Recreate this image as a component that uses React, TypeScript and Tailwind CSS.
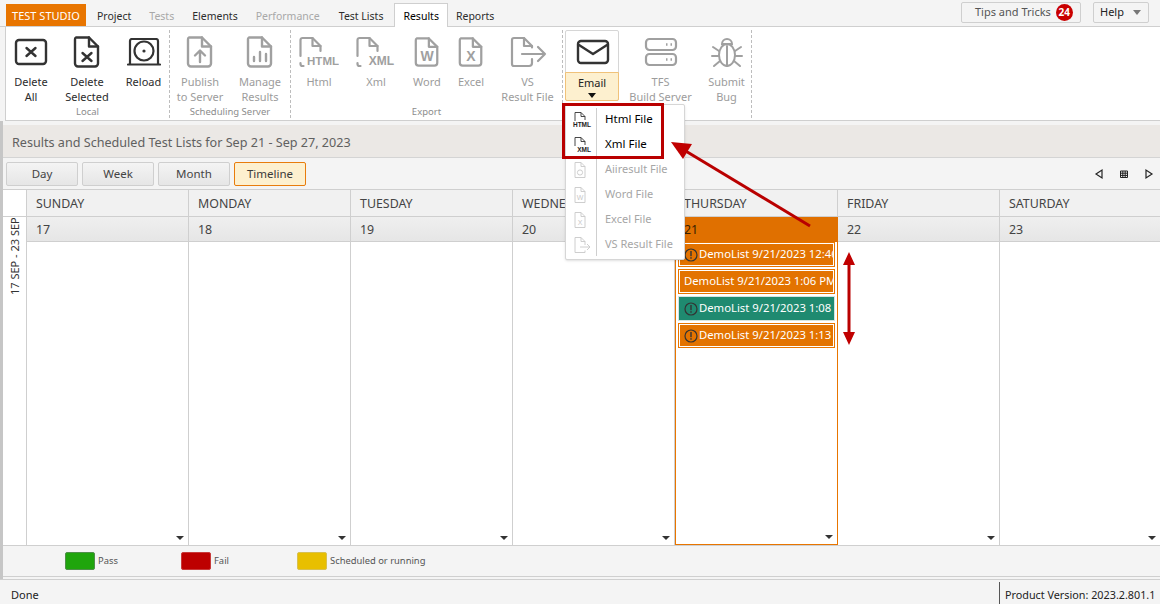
import type { ReactNode } from "react";

const ink = "#333333";
const mute = "#a0a0a0";

function FileIcon({ color, children, w = 30 }: { color: string; children?: ReactNode; w?: number }) {
  return (
    <svg width={w} height="32" viewBox="0 0 30 32" fill="none" stroke={color} strokeWidth="2.4" strokeLinejoin="round" strokeLinecap="round">
      <path d="M4 1.5h13l9 9v17a3 3 0 0 1-3 3H6a3 3 0 0 1-3-3v-24a2 2 0 0 1 1-2z" />
      <path d="M17 1.5v9h9" />
      {children}
    </svg>
  );
}

function LabelFile({ label, small }: { label: string; small?: boolean }) {
  return (
    <svg width="40" height="32" viewBox="0 0 40 32" fill="none" stroke={mute} strokeWidth="2.2" strokeLinejoin="round" strokeLinecap="round">
      <path d="M1.5 20V4a2 2 0 0 1 2-2h10l8 8v5" />
      <path d="M13.5 2v8h8" />
      <path d="M1.5 27v1a2 2 0 0 0 2 2h1" />
      <text x={small ? 38 : 40} y="29" textAnchor="end" fill={mute} stroke="none" fontSize={small ? 12 : 11.5} fontWeight="700" fontFamily="'Liberation Sans', sans-serif">{label}</text>
    </svg>
  );
}

function RibbonButton({ w, lines, muted, children }: { w: string; lines: string[]; muted?: boolean; children: ReactNode }) {
  return (
    <div className={`${w} flex flex-col items-center shrink-0`}>
      <div className="h-[36px] mt-[4px] flex items-center justify-center">{children}</div>
      <div className={`mt-[4px] text-[11px] leading-[15px] text-center whitespace-nowrap ${muted ? "text-[#9c9c9c]" : "text-[#2c2c2c]"}`}>
        {lines.map((l) => (
          <div key={l}>{l}</div>
        ))}
      </div>
    </div>
  );
}

function RibbonGroup({ label, children }: { label?: string; children: ReactNode }) {
  return (
    <div className="relative flex border-r border-dashed border-[#bdbdbd] h-[88px] mt-[3px] shrink-0">
      {children}
      {label && <div className="absolute left-0 right-0 top-[75px] text-center text-[9.5px] leading-[14px] text-[#8c8c8c]">{label}</div>}
    </div>
  );
}

function Tab({ label, off }: { label: string; off?: boolean }) {
  return <div className={`px-[9px] mt-[3px] text-[10.5px] leading-[26px] h-[23px] ${off ? "text-[#a8a8a8]" : "text-[#2c2c2c]"}`}>{label}</div>;
}

function ViewButton({ label, active }: { label: string; active?: boolean }) {
  return (
    <div
      className={`w-[72px] h-[24px] rounded-[2px] border text-center text-[11.5px] leading-[22px] ${
        active ? "border-[#e87c0c] bg-[#fdf0cf] text-[#3a3a3a]" : "border-[#cfcfcf] bg-gradient-to-b from-[#f4f4f4] to-[#e6e6e6] text-[#444444]"
      }`}
    >
      {label}
    </div>
  );
}

function Alert() {
  return (
    <svg width="14" height="14" viewBox="0 0 14 14" className="shrink-0" fill="none">
      <circle cx="7" cy="7" r="6" stroke="#333333" strokeWidth="1.2" />
      <rect x="6.3" y="3" width="1.4" height="5.2" fill="#333333" />
      <rect x="6.3" y="9.2" width="1.4" height="1.5" fill="#333333" />
    </svg>
  );
}

function EventItem({ text, teal, noIcon }: { text: string; teal?: boolean; noIcon?: boolean }) {
  return (
    <div className={`h-[25px] mb-[2px] border ${teal ? "border-[#d7e4e0]" : "border-[#e87500]"}`}>
      <div className={`h-full flex items-center gap-[1px] border pl-[4px] overflow-hidden ${teal ? "bg-[#1f8a70] border-[#1f8a70]" : "bg-[#e37300] border-white"}`}>
        {!noIcon && <Alert />}
        <span className="text-[11.3px] text-white whitespace-nowrap">{text}</span>
      </div>
    </div>
  );
}

function Caret() {
  return <div className="absolute right-[4px] bottom-[5px] w-0 h-0 border-x-[4px] border-x-transparent border-t-[4px] border-t-[#333333]" />;
}

const days = [
  { name: "SUNDAY", n: "17", w: "w-[162px]" },
  { name: "MONDAY", n: "18", w: "w-[162px]" },
  { name: "TUESDAY", n: "19", w: "w-[162px]" },
  { name: "WEDNESDAY", n: "20", w: "w-[162px]" },
  { name: "THURSDAY", n: "21", w: "w-[163px]", today: true },
  { name: "FRIDAY", n: "22", w: "w-[162px]" },
  { name: "SATURDAY", n: "23", w: "w-[161px]" },
];

function MenuItem({ label, off, icon }: { label: string; off?: boolean; icon: ReactNode }) {
  return (
    <div className="flex h-[25px] items-center">
      <div className="w-[31px] flex justify-center shrink-0">{icon}</div>
      <div className={`pl-[8px] ${off ? "text-[11px] text-[#a6a6a6]" : "text-[11.5px] text-black pb-[2px]"}`}>{label}</div>
    </div>
  );
}

function MiniFile({ label, letter, ring, arrow }: { label?: string; letter?: string; ring?: boolean; arrow?: boolean }) {
  const c = label ? "#333333" : "#c8c8c8";
  return (
    <svg width="20" height="18" viewBox="0 0 20 18" fill="none" stroke={c} strokeWidth="0.9">
      <path d="M3 10V1.5h6l4 4V9" />
      <path d="M9 1.5v4h4" />
      {!label && !arrow && <path d="M3 10v6.5h10V9" />}
      {arrow && <path d="M3 10v6.5h10v-2M8 11h10M15 8l3 3-3 3" />}
      {ring && <circle cx="8" cy="11.5" r="2.6" />}
      {label && <text x="19" y="16" textAnchor="end" fill="#222222" stroke="none" fontSize="6.5" fontWeight="700" fontFamily="'Liberation Sans', sans-serif">{label}</text>}
      {letter && <text x="8" y="14" textAnchor="middle" fill={c} stroke="none" fontSize="7" fontFamily="'Liberation Sans', sans-serif">{letter}</text>}
    </svg>
  );
}

export default function App() {
  return (
    <div className="relative w-[1160px] h-[604px] overflow-hidden bg-[#f4f4f4] font-['Noto_Sans',sans-serif]">
      {/* tabs */}
      <div className="h-[27px] flex border-b border-[#cfcfcf] pl-[6px]">
        <div className="mt-[4px] h-[22px] w-[80px] bg-[#e87500] text-white text-[11px] leading-[23px] text-center">TEST STUDIO</div>
        <div className="flex pl-[2px]">
          <Tab label="Project" />
          <Tab label="Tests" off />
          <Tab label="Elements" />
          <Tab label="Performance" off />
          <div className="ml-[1px]">
            <Tab label="Test Lists" />
          </div>
          <div className="ml-[2px] mt-[3px] h-[24px] px-[8px] bg-white border border-b-0 border-[#cfcfcf] text-[10.5px] leading-[25px] text-black">Results</div>
          <div className="-ml-[1px]">
            <Tab label="Reports" />
          </div>
        </div>
        <div className="ml-auto flex items-start pt-[2px] pr-[11px]">
          <div className="w-[120px] h-[21px] border border-[#cfcfcf] rounded-[2px] flex items-center pl-[13px] gap-[5px] text-[11px] text-[#555555]">
            Tips and Tricks
            <span className="w-[17px] h-[17px] rounded-full bg-[#c90000] text-white text-[10px] font-bold leading-[17px] text-center">24</span>
          </div>
          <div className="ml-[12px] w-[56px] h-[21px] border border-[#cfcfcf] rounded-[2px] flex items-center pl-[6px] text-[11px] text-[#222222]">
            Help
            <span className="ml-auto mr-[7px] w-0 h-0 border-x-[4px] border-x-transparent border-t-[5px] border-t-[#777777]" />
          </div>
        </div>
      </div>

      {/* ribbon */}
      <div className="ml-[5px] h-[94px] bg-white border-l border-b border-[#cfcfcf] flex">
        <RibbonGroup label="Local">
          <RibbonButton w="w-[50px]" lines={["Delete", "All"]}>
            <svg width="34" height="30" viewBox="0 0 34 30" fill="none" stroke={ink} strokeWidth="2.4" strokeLinecap="round">
              <rect x="2" y="3" width="30" height="24" rx="3" />
              <path d="M12.5 11l9 8M21.5 11l-9 8" />
            </svg>
          </RibbonButton>
          <RibbonButton w="w-[62px]" lines={["Delete", "Selected"]}>
            <FileIcon color={ink}>
              <path d="M10.5 17l9 8M19.5 17l-9 8" />
            </FileIcon>
          </RibbonButton>
          <RibbonButton w="w-[51px]" lines={["Reload"]}>
            <svg width="34" height="28" viewBox="0 0 34 28" fill="none" stroke={ink} strokeWidth="2.2" strokeLinecap="round">
              <path d="M3 26V3a2 2 0 0 1 2-2h24a2 2 0 0 1 2 2v23" />
              <path d="M1 26.5h32" />
              <circle cx="17" cy="13" r="9.5" />
              <circle cx="17" cy="13" r="1.6" fill={ink} stroke="none" />
            </svg>
          </RibbonButton>
        </RibbonGroup>
        <RibbonGroup label="Scheduling Server">
          <RibbonButton w="w-[60px]" lines={["Publish", "to Server"]} muted>
            <FileIcon color={mute}>
              <path d="M15 26V15M10 19.5l5-5 5 5" />
            </FileIcon>
          </RibbonButton>
          <RibbonButton w="w-[60px]" lines={["Manage", "Results"]} muted>
            <FileIcon color={mute}>
              <path d="M9 25v-4M15 25v-9M21 25v-7" />
            </FileIcon>
          </RibbonButton>
        </RibbonGroup>
        <RibbonGroup label="Export">
          <RibbonButton w="w-[56px]" lines={["Html"]} muted>
            <LabelFile label="HTML" />
          </RibbonButton>
          <RibbonButton w="w-[58px]" lines={["Xml"]} muted>
            <LabelFile label="XML" small />
          </RibbonButton>
          <RibbonButton w="w-[44px]" lines={["Word"]} muted>
            <FileIcon color={mute} w={28}>
              <text x="15" y="26" textAnchor="middle" fill={mute} stroke="none" fontSize="15" fontWeight="700" fontFamily="'Liberation Sans', sans-serif">W</text>
            </FileIcon>
          </RibbonButton>
          <RibbonButton w="w-[44px]" lines={["Excel"]} muted>
            <FileIcon color={mute} w={28}>
              <text x="15" y="26" textAnchor="middle" fill={mute} stroke="none" fontSize="15" fontWeight="700" fontFamily="'Liberation Sans', sans-serif">X</text>
            </FileIcon>
          </RibbonButton>
          <RibbonButton w="w-[69px]" lines={["VS", "Result File"]} muted>
            <svg width="38" height="32" viewBox="0 0 38 32" fill="none" stroke={mute} strokeWidth="2.2" strokeLinejoin="round" strokeLinecap="round">
              <path d="M23 11.5V10l-8-8H5a2 2 0 0 0-2 2v24a2 2 0 0 0 2 2h15a3 3 0 0 0 3-3v-4" />
              <path d="M15 2v8h8" />
              <path d="M13 18h23M29 11l7 7-7 7" />
            </svg>
          </RibbonButton>
        </RibbonGroup>
        <div className="flex border-r border-dashed border-[#bdbdbd] h-[88px] mt-[3px] shrink-0 pl-[2px]">
          <div className="w-[54px] h-[71px] rounded-[2px] border border-[#d6d6d6] flex flex-col items-center shrink-0">
            <div className="h-[41px] pt-[1px] pl-[2px] flex items-center justify-center">
              <svg width="34" height="26" viewBox="0 0 34 26" fill="none" stroke={ink} strokeWidth="2.4" strokeLinecap="round" strokeLinejoin="round">
                <rect x="2" y="2" width="30" height="22" rx="3" />
                <path d="M3 6l14 9 14-9" />
              </svg>
            </div>
            <div className="w-[54px] -mb-px flex-1 rounded-b-[2px] border border-[#f0c27a] bg-[#fdf0cf] flex flex-col items-center text-[11px] leading-[15px] text-[#222222] pt-[2px]">
              Email
              <span className="mt-[3px] w-0 h-0 border-x-[4px] border-x-transparent border-t-[5px] border-t-[#111111]" />
            </div>
          </div>
          <RibbonButton w="w-[83px]" lines={["TFS", "Build Server"]} muted>
            <svg width="34" height="30" viewBox="0 0 34 30" fill="none" stroke={mute} strokeWidth="2.2">
              <rect x="2" y="2" width="30" height="11" rx="3.5" />
              <rect x="2" y="17" width="30" height="11" rx="3.5" />
              <path d="M22 7.5h1.5M26.5 7.5H28M22 22.5h1.5M26.5 22.5H28" strokeWidth="2.6" />
            </svg>
          </RibbonButton>
          <RibbonButton w="w-[49px]" lines={["Submit", "Bug"]} muted>
            <svg width="32" height="34" viewBox="0 0 32 34" fill="none" stroke={mute} strokeWidth="2" strokeLinecap="round">
              <path d="M11 9a5 5 0 0 1 10 0z" />
              <ellipse cx="16" cy="20" rx="8" ry="11" />
              <path d="M16 11v20M2 12l6 4M30 12l-6 4M1 21h7M31 21h-7M3 31l6-5M29 31l-6-5" />
            </svg>
          </RibbonButton>
        </div>
      </div>

      {/* body */}
      <div className="flex h-[458px]">
        <div className="w-[3px] bg-[#c6c6c6] shrink-0" />
        <div className="flex-1 flex flex-col min-w-0">
          <div className="h-[4px]" />
          <div className="h-[33px] bg-[#ebe8e5] border-b border-[#d4d4d4] pl-[9px] text-[12.6px] leading-[35px] text-[#606060]">
            Results and Scheduled Test Lists for Sep 21 - Sep 27, 2023
          </div>
          <div className="h-[32px] flex items-center gap-[4px] pl-[3px] pr-[5px] border-b border-[#cfcfcf]">
            <ViewButton label="Day" />
            <ViewButton label="Week" />
            <ViewButton label="Month" />
            <ViewButton label="Timeline" active />
            <div className="ml-auto flex items-center gap-[13px]">
              <svg width="12" height="12" viewBox="0 0 12 12" fill="none" stroke="#222222" strokeWidth="1.2"><path d="M9 2v8L3 6z" /></svg>
              <svg width="12" height="12" viewBox="0 0 12 12" fill="none" stroke="#222222" strokeWidth="1"><path d="M2.5 3h7v6.5h-7zM2.5 5.2h7M2.5 7.4h7M4.8 3v6.5M7.2 3v6.5" /></svg>
              <svg width="12" height="12" viewBox="0 0 12 12" fill="none" stroke="#222222" strokeWidth="1.2"><path d="M3 2v8l6-4z" /></svg>
            </div>
          </div>

          {/* calendar */}
          <div className="h-[356px] flex bg-white border-b border-[#cfcfcf]">
            <div className="w-[24px] shrink-0 border-r border-[#cfcfcf]">
              <div className="h-[27px] border-b border-[#cfcfcf]" />
              <div className="w-[23px] h-[80px] pt-[2px] [writing-mode:vertical-rl] rotate-180 text-[11px] leading-[23px] text-[#333333] whitespace-nowrap text-left">17 SEP - 23 SEP</div>
            </div>
            {days.map((d) => (
              <div key={d.name} className={`${d.w} shrink-0 flex flex-col`}>
                <div className="h-[27px] bg-[#f1f1f1] border-b border-r border-[#cfcfcf] pl-[9px] text-[12.4px] leading-[27px] text-[#444444]">{d.name}</div>
                <div className={`h-[25px] border-b pl-[9px] text-[12.4px] leading-[25px] ${d.today ? "bg-[#e07000] border-[#e07000] text-[#3a2000]" : "bg-gradient-to-b from-[#efefef] to-[#e6e6e6] border-[#cfcfcf] border-r text-[#444444]"}`}>{d.n}</div>
                {d.today ? (
                  <div className="relative flex-1 border-x border-b border-[#e87500] pl-[2px] pr-[2px]">
                    <EventItem text="DemoList 9/21/2023 12:46 PM" />
                    <EventItem text="DemoList 9/21/2023 1:06 PM" noIcon />
                    <EventItem text="DemoList 9/21/2023 1:08 PM" teal />
                    <EventItem text="DemoList 9/21/2023 1:13 PM" />
                    <Caret />
                  </div>
                ) : (
                  <div className="relative flex-1 border-r border-[#cfcfcf]">
                    <Caret />
                  </div>
                )}
              </div>
            ))}
          </div>

          {/* legend */}
          <div className="h-[31px] flex items-center pl-[62px] text-[9.4px] text-[#555555] border-b border-[#cfcfcf]">
            <span className="w-[30px] h-[18px] rounded-[2px] bg-[#1fa50c] border border-[#4f8f4a]" />
            <span className="ml-[3px] w-[83px]">Pass</span>
            <span className="w-[30px] h-[18px] rounded-[2px] bg-[#bd0000] border border-[#c83a3a]" />
            <span className="ml-[3px] w-[83px]">Fail</span>
            <span className="w-[30px] h-[18px] rounded-[2px] bg-[#e8bf00] border border-[#d8c050]" />
            <span className="ml-[3px]">Scheduled or running</span>
          </div>
        </div>
      </div>

      {/* status bar */}
      <div className="h-[25px] border-t border-[#cfcfcf] flex items-start pl-[11px] text-[11px] leading-[30px] text-[#222222]">
        Done
        <div className="ml-auto mt-[2px] h-[22px] w-[161px] border-l border-[#555555] pl-[5px] text-[10.8px] leading-[26px] whitespace-nowrap">Product Version: 2023.2.801.1</div>
      </div>

      {/* email dropdown */}
      <div className="absolute left-[565px] top-[104px] w-[120px] h-[156px] bg-white border border-[#d6d6d6] rounded-[2px] shadow-sm pt-[2px]">
        <div className="absolute left-[30px] top-[3px] bottom-[3px] w-px bg-[#cfcfcf]" />
        <MenuItem label="Html File" icon={<MiniFile label="HTML" />} />
        <MenuItem label="Xml File" icon={<MiniFile label="XML" />} />
        <MenuItem label="Aiiresult File" off icon={<MiniFile ring />} />
        <MenuItem label="Word File" off icon={<MiniFile letter="W" />} />
        <MenuItem label="Excel File" off icon={<MiniFile letter="X" />} />
        <MenuItem label="VS Result File" off icon={<MiniFile arrow />} />
      </div>

      {/* annotations */}
      <div className="absolute left-[562px] top-[103px] w-[102px] h-[56px] border-[3px] border-[#b90000]" />
      <svg className="absolute left-0 top-0 pointer-events-none" width="1160" height="604" viewBox="0 0 1160 604" fill="#c00000" stroke="none">
        <path d="M810 226L684 150" stroke="#b90000" strokeWidth="3" />
        <path d="M671 142l21 2-9 15z" />
        <path d="M849 262v72" stroke="#b90000" strokeWidth="3" />
        <path d="M849 252l6 13h-12zM849 345l6-13h-12z" />
      </svg>
    </div>
  );
}
